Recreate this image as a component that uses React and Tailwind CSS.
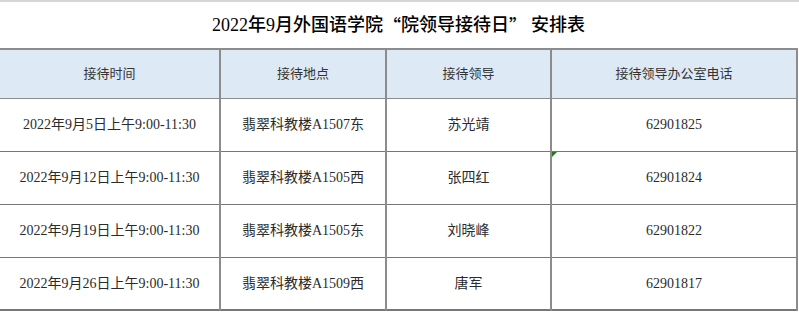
import React from "react";

const rows = [
  { time: "2022年9月5日上午9:00-11:30", place: "翡翠科教楼A1507东", leader: "苏光靖", phone: "62901825" },
  { time: "2022年9月12日上午9:00-11:30", place: "翡翠科教楼A1505西", leader: "张四红", phone: "62901824" },
  { time: "2022年9月19日上午9:00-11:30", place: "翡翠科教楼A1505东", leader: "刘晓峰", phone: "62901822" },
  { time: "2022年9月26日上午9:00-11:30", place: "翡翠科教楼A1509西", leader: "唐军", phone: "62901817" },
];

const headers = ["接待时间", "接待地点", "接待领导", "接待领导办公室电话"];

export default function App() {
  return (
    <div
      className="w-[799px] h-[312px] bg-white text-[#2b2b2b] overflow-hidden"
      style={{ fontFamily: '"Liberation Serif", "Noto Sans CJK SC", serif' }}
    >
      {/* faint sheet line above the title */}
      <div className="h-[2px] bg-[#d6d6d6]" />

      <div className="w-[797px] h-[46px] flex items-center justify-center text-[18px] text-black font-medium">
        2022年9月外国语学院
        <span className="font-['Noto_Sans_CJK_SC'] inline-block w-[18px] text-right">“</span>
        院领导接待日
        <span className="font-['Noto_Sans_CJK_SC'] inline-block w-[18px] text-left">”</span>
        <span className="w-[4px]" />
        安排表
      </div>

      <table className="w-[797px] table-fixed border-collapse">
        <colgroup>
          <col className="w-[220px]" />
          <col className="w-[166px]" />
          <col className="w-[165px]" />
          <col className="w-[246px]" />
        </colgroup>
        <thead>
          <tr className="h-[49px] bg-[#dde9f5] border-t-2 border-b border-[#8c8c8c]">
            {headers.map((h) => (
              <th key={h} className="font-normal text-[13px] text-[#333] text-center border-r-2 border-[#8c8c8c]">
                {h}
              </th>
            ))}
          </tr>
        </thead>
        <tbody>
          {rows.map((r, idx) => (
            <tr
              key={r.phone}
              className={`h-[53px] border-b border-[#777] ${idx === rows.length - 1 ? "border-b-2" : ""}`}
            >
              <td className="text-center text-[14px] border-r-2 border-[#8c8c8c]">{r.time}</td>
              <td className="text-center text-[14px] border-r-2 border-[#8c8c8c]">{r.place}</td>
              <td className="text-center text-[14px] border-r-2 border-[#8c8c8c]">{r.leader}</td>
              <td className="relative text-center text-[14px] border-r-2 border-[#8c8c8c]">
                {idx === 1 && (
                  <span className="absolute left-0 top-0 w-0 h-0 border-t-[5px] border-r-[5px] border-t-[#1a7f1a] border-r-transparent" />
                )}
                {r.phone}
              </td>
            </tr>
          ))}
        </tbody>
      </table>
    </div>
  );
}
